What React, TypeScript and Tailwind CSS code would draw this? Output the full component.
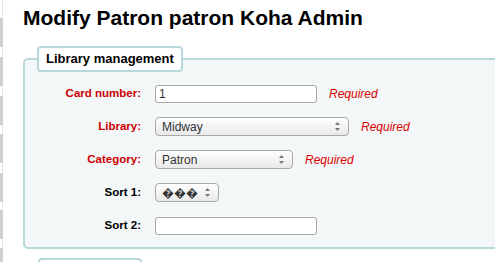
import React from 'react';

const Arrows = () => (
  <svg width="7" height="11" viewBox="0 0 7 11" className="shrink-0">
    <path d="M3.5 1 L6 4 L1 4 Z" fill="#777" />
    <path d="M3.5 10 L6 7 L1 7 Z" fill="#777" />
  </svg>
);

const Select = ({ value, width }: { value: string; width: string }) => (
  <div
    className={`${width} h-[19px] flex items-center justify-between pl-[6px] pr-[7px] border border-[#a9a9a9] rounded-[4px] bg-gradient-to-b from-white to-[#e9e9e9] text-[12px] text-[#333]`}
  >
    <span>{value}</span>
    <Arrows />
  </div>
);

const Required = () => (
  <span className="text-[12px] italic text-[#d00] leading-none">Required</span>
);

const Row = ({ label, red, children }: { label: string; red?: boolean; children: React.ReactNode }) => (
  <div className="flex items-center h-[33px]">
    <div className={`w-[116px] text-right text-[11.5px] font-bold ${red ? 'text-[#cc0000]' : 'text-black'}`}>{label}</div>
    <div className="flex items-center gap-[12px] ml-[14px]">{children}</div>
  </div>
);

export default function App() {
  const stripes = [18, 57, 96, 134, 173, 210, 248];
  return (
    <div className="relative w-[495px] h-[262px] overflow-hidden bg-white font-['Liberation_Sans',Arial,sans-serif]">
      <div className="absolute left-0 top-0 w-[3px] h-full border-r border-[#d8e6e6]" />
      {stripes.map((y) => (
        <div key={y} className="absolute left-0 w-[3px] h-[29px] bg-[#cfcfcf]" style={{ top: y }} />
      ))}

      <div className="pl-[23px]">
        <h1 className="pt-[6px] text-[21px] font-bold text-black leading-[24px]">Modify Patron patron Koha Admin</h1>

        <div className="relative mt-[28px] w-[490px] h-[191px] border-2 border-[#b9d8d9] rounded-[5px] bg-[#f3f7f8]">
          <div className="absolute left-[12px] top-[-14px] h-[26px] px-[7px] flex items-center bg-white border-2 border-[#b9d8d9] rounded-[4px] text-[13px] font-bold text-black">
            Library management
          </div>
          <div className="pt-[17px]">
            <Row label="Card number:" red>
              <div className="w-[162px] h-[18px] border border-[#a9a9a9] rounded-[3px] bg-white text-[12px] text-[#333] pl-[3px] flex items-center">1</div>
              <Required />
            </Row>
            <Row label="Library:" red>
              <Select value="Midway" width="w-[194px]" />
              <Required />
            </Row>
            <Row label="Category:" red>
              <Select value="Patron" width="w-[138px]" />
              <Required />
            </Row>
            <Row label="Sort 1:">
              <Select value="���" width="w-[64px]" />
            </Row>
            <Row label="Sort 2:">
              <div className="w-[162px] h-[18px] border border-[#a9a9a9] rounded-[3px] bg-white" />
            </Row>
          </div>
        </div>

        <div className="ml-[15px] mt-[9px] w-[104px] h-[10px] border-2 border-[#b9d8d9] rounded-[4px] bg-white" />
      </div>
    </div>
  );
}
